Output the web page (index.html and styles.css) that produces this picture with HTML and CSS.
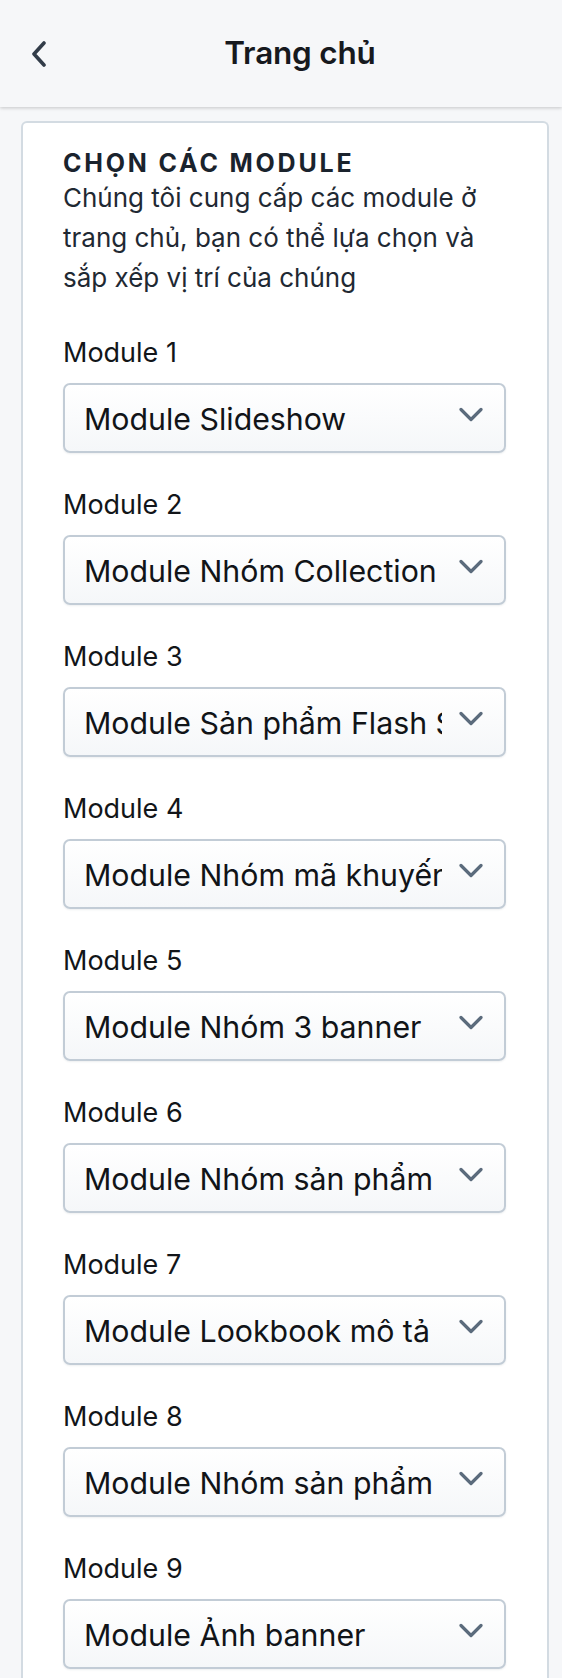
FILE: index.html
```html
<!DOCTYPE html>
<html lang="vi">
<head>
<meta charset="utf-8">
<title>Trang chủ</title>
<link rel="stylesheet" href="styles.css">
</head>
<body>
<header class="topbar">
  <button class="back" aria-label="Quay lại">
    <svg width="16" height="26" viewBox="0 0 16 26"><path d="M13 2 L3 13 L13 24" fill="none" stroke="#323c49" stroke-width="3.6" stroke-linecap="round" stroke-linejoin="round"/></svg>
  </button>
  <h1 class="title">Trang chủ</h1>
</header>
<main class="content">
  <section class="card">
    <h2 class="heading">CHỌN CÁC MODULE</h2>
    <p class="desc">Chúng tôi cung cấp các module ở trang chủ, bạn có thể lựa chọn và sắp xếp vị trí của chúng</p>
    <div class="fields">
      <div class="field"><label class="label">Module 1</label><div class="select"><span class="value">Module Slideshow</span><svg class="chev" width="24" height="16" viewBox="0 0 24 16"><path d="M2 2.5 L12 12.5 L22 2.5" fill="none" stroke="#5b6b7c" stroke-width="3.2" stroke-linecap="round" stroke-linejoin="round"/></svg></div></div>
      <div class="field"><label class="label">Module 2</label><div class="select"><span class="value">Module Nhóm Collection</span><svg class="chev" width="24" height="16" viewBox="0 0 24 16"><path d="M2 2.5 L12 12.5 L22 2.5" fill="none" stroke="#5b6b7c" stroke-width="3.2" stroke-linecap="round" stroke-linejoin="round"/></svg></div></div>
      <div class="field"><label class="label">Module 3</label><div class="select"><span class="value">Module Sản phẩm Flash Sale</span><svg class="chev" width="24" height="16" viewBox="0 0 24 16"><path d="M2 2.5 L12 12.5 L22 2.5" fill="none" stroke="#5b6b7c" stroke-width="3.2" stroke-linecap="round" stroke-linejoin="round"/></svg></div></div>
      <div class="field"><label class="label">Module 4</label><div class="select"><span class="value">Module Nhóm mã khuyến mãi</span><svg class="chev" width="24" height="16" viewBox="0 0 24 16"><path d="M2 2.5 L12 12.5 L22 2.5" fill="none" stroke="#5b6b7c" stroke-width="3.2" stroke-linecap="round" stroke-linejoin="round"/></svg></div></div>
      <div class="field"><label class="label">Module 5</label><div class="select"><span class="value">Module Nhóm 3 banner</span><svg class="chev" width="24" height="16" viewBox="0 0 24 16"><path d="M2 2.5 L12 12.5 L22 2.5" fill="none" stroke="#5b6b7c" stroke-width="3.2" stroke-linecap="round" stroke-linejoin="round"/></svg></div></div>
      <div class="field"><label class="label">Module 6</label><div class="select"><span class="value">Module Nhóm sản phẩm 1</span><svg class="chev" width="24" height="16" viewBox="0 0 24 16"><path d="M2 2.5 L12 12.5 L22 2.5" fill="none" stroke="#5b6b7c" stroke-width="3.2" stroke-linecap="round" stroke-linejoin="round"/></svg></div></div>
      <div class="field"><label class="label">Module 7</label><div class="select"><span class="value">Module Lookbook mô tả</span><svg class="chev" width="24" height="16" viewBox="0 0 24 16"><path d="M2 2.5 L12 12.5 L22 2.5" fill="none" stroke="#5b6b7c" stroke-width="3.2" stroke-linecap="round" stroke-linejoin="round"/></svg></div></div>
      <div class="field"><label class="label">Module 8</label><div class="select"><span class="value">Module Nhóm sản phẩm 2</span><svg class="chev" width="24" height="16" viewBox="0 0 24 16"><path d="M2 2.5 L12 12.5 L22 2.5" fill="none" stroke="#5b6b7c" stroke-width="3.2" stroke-linecap="round" stroke-linejoin="round"/></svg></div></div>
      <div class="field"><label class="label">Module 9</label><div class="select"><span class="value">Module Ảnh banner</span><svg class="chev" width="24" height="16" viewBox="0 0 24 16"><path d="M2 2.5 L12 12.5 L22 2.5" fill="none" stroke="#5b6b7c" stroke-width="3.2" stroke-linecap="round" stroke-linejoin="round"/></svg></div></div>
    </div>
  </section>
</main>
</body>
</html>
```
FILE: styles.css
```css
* { box-sizing: border-box; }
html, body { margin: 0; padding: 0; }
body {
  background: #f6f7f9;
  font-family: Inter, "Noto Sans", "Liberation Sans", sans-serif;
  color: #111418;
}
.topbar {
  height: 107px;
  background: #f6f7f9;
  box-shadow: 0 1px 3px rgba(0, 0, 0, 0.14), 0 2px 4px rgba(0, 0, 0, 0.05);
  display: flex;
  align-items: center;
  justify-content: center;
  padding-left: 38px;
  position: relative;
}
.back {
  position: absolute;
  left: 31px;
  top: 41px;
  border: 0;
  background: none;
  padding: 0;
  display: flex;
}
.title {
  margin: 0;
  font-size: 31.5px;
  font-weight: 600;
  color: #16191e;
  letter-spacing: -0.2px;
  line-height: 36px;
  margin-top: -2px;
}
.content {
  padding: 14px 13px 0 21px;
}
.card {
  background: #fff;
  border: 2px solid #d3dbe2;
  border-bottom: 0;
  border-radius: 6px 6px 0 0;
  padding: 25px 41px 60px 40px;
}
.heading {
  margin: 0;
  font-size: 25px;
  line-height: 30px;
  font-weight: 700;
  letter-spacing: 2.8px;
  color: #1a232d;
}
.desc {
  margin: 0;
  font-size: 26px;
  line-height: 40px;
  color: #1f2933;
}
.fields {
  display: flex;
  flex-direction: column;
  gap: 36px;
  margin-top: 39px;
}
.field {
  display: flex;
  flex-direction: column;
  gap: 14px;
}
.label {
  font-size: 27px;
  line-height: 32px;
  color: #121519;
}
.select {
  height: 70px;
  border: 2px solid #c2ccd6;
  border-radius: 7px;
  background: linear-gradient(#ffffff, #f5f7f9);
  box-shadow: 0 1px 2px rgba(30, 50, 70, 0.08);
  display: flex;
  align-items: center;
  padding: 0 21px 0 19px;
  gap: 17px;
}
.value {
  flex: 1;
  min-width: 0;
  overflow: hidden;
  white-space: nowrap;
  font-size: 30.3px;
  line-height: 36px;
  color: #111418;
  margin-top: 2px;
}
.chev {
  flex: none;
  margin-top: -6px;
}
```
